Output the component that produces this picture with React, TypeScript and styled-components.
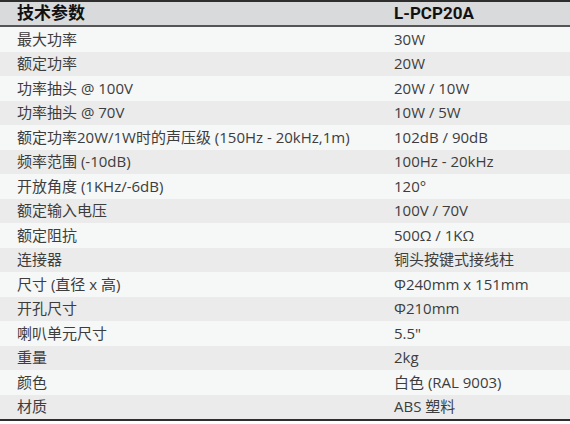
import React from 'react'
import styled, { createGlobalStyle } from 'styled-components'

const specs: [string, string][] = [
  ['最大功率', '30W'],
  ['额定功率', '20W'],
  ['功率抽头 @ 100V', '20W / 10W'],
  ['功率抽头 @ 70V', '10W / 5W'],
  ['额定功率20W/1W时的声压级 (150Hz - 20kHz,1m)', '102dB / 90dB'],
  ['频率范围 (-10dB)', '100Hz - 20kHz'],
  ['开放角度 (1KHz/-6dB)', '120°'],
  ['额定输入电压', '100V / 70V'],
  ['额定阻抗', '500Ω / 1KΩ'],
  ['连接器', '铜头按键式接线柱'],
  ['尺寸 (直径 x 高)', 'Φ240mm x 151mm'],
  ['开孔尺寸', 'Φ210mm'],
  ['喇叭单元尺寸', '5.5"'],
  ['重量', '2kg'],
  ['颜色', '白色 (RAL 9003)'],
  ['材质', 'ABS 塑料'],
]

const GlobalStyle = createGlobalStyle`
  body {
    margin: 0;
    background: #ffffff;
    font-family: "Open Sans", "Noto Sans CJK SC", sans-serif;
  }
`

const SpecTable = styled.section`
  width: 570px;
  border-top: 2px solid #2e2e2e;
  border-bottom: 2px solid #2e2e2e;
`

const Row = styled.div<{ $shade: 'head' | 'light' | 'dark' }>`
  display: grid;
  grid-template-columns: 377px 1fr;
  align-items: center;
  padding-left: 17px;
  box-sizing: border-box;
  height: ${({ $shade }) => ($shade === 'head' ? '25px' : '24.5px')};
  background: ${({ $shade }) =>
    $shade === 'head' ? '#d9dadb' : $shade === 'light' ? '#f6f7f7' : '#ebebeb'};
  border-bottom: ${({ $shade }) => ($shade === 'head' ? '2px solid #555555' : 'none')};
`

const HeadCell = styled.div`
  font-family: Roboto, "Noto Sans CJK SC", sans-serif;
  font-weight: 700;
  font-size: 17px;
  color: #111111;
  line-height: 1;
`

const Cell = styled.div`
  font-size: 15px;
  font-weight: 400;
  color: #3d3d3d;
  line-height: 1;
  white-space: nowrap;
`

export default function App() {
  return (
    <>
      <GlobalStyle />
      <SpecTable>
        <Row $shade="head">
          <HeadCell>技术参数</HeadCell>
          <HeadCell>L-PCP20A</HeadCell>
        </Row>
        {specs.map(([label, value], i) => (
          <Row key={label} $shade={i % 2 === 0 ? 'light' : 'dark'}>
            <Cell>{label}</Cell>
            <Cell>{value}</Cell>
          </Row>
        ))}
      </SpecTable>
    </>
  )
}
